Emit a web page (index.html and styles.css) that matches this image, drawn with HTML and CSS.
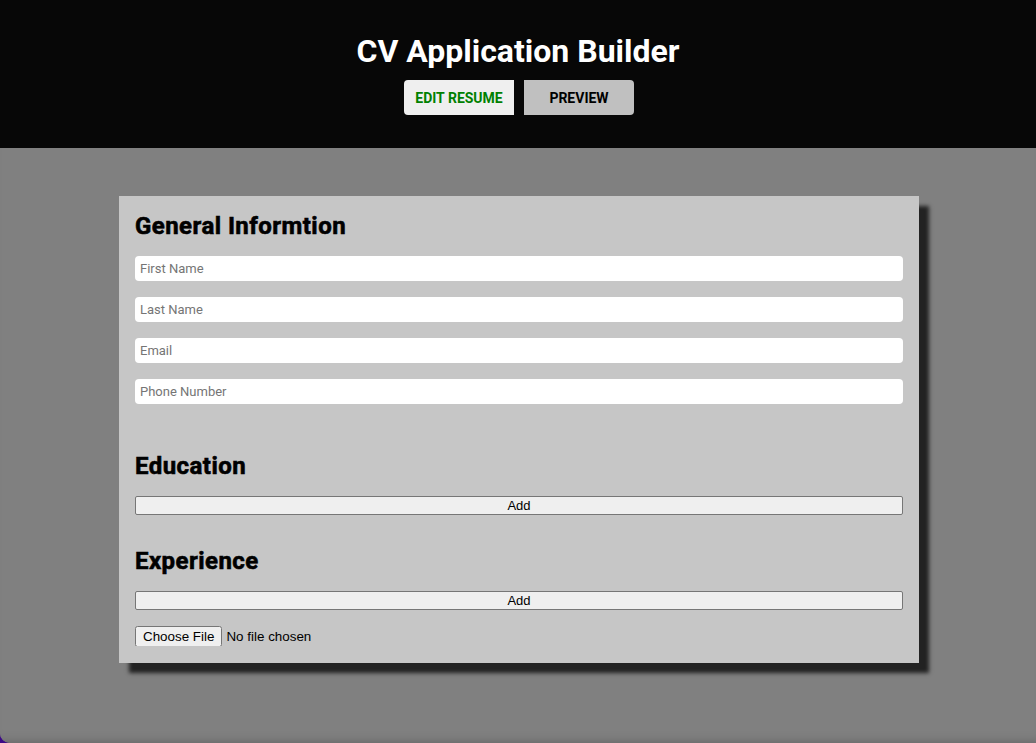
FILE: index.html
```html
<!DOCTYPE html>
<html lang="en">
<head>
<meta charset="utf-8">
<title>CV Application Builder</title>
<link rel="stylesheet" href="styles.css">
</head>
<body>
<div class="app">
  <header class="header">
    <h1 class="title">CV Application Builder</h1>
    <nav class="tabs">
      <button class="tab tab-edit">EDIT RESUME</button>
      <button class="tab tab-preview">PREVIEW</button>
    </nav>
  </header>
  <main class="main">
    <div class="card">
      <section class="section section-general">
        <h2 class="section-title">General Informtion</h2>
        <input class="field" type="text" placeholder="First Name">
        <input class="field" type="text" placeholder="Last Name">
        <input class="field" type="text" placeholder="Email">
        <input class="field" type="text" placeholder="Phone Number">
      </section>
      <section class="section">
        <h2 class="section-title">Education</h2>
        <button class="add-btn">Add</button>
      </section>
      <section class="section section-last">
        <h2 class="section-title">Experience</h2>
        <button class="add-btn">Add</button>
        <input class="file" type="file">
      </section>
    </div>
  </main>
</div>
</body>
</html>
```
FILE: styles.css
```css
html, body {
  margin: 0;
  padding: 0;
  height: 100%;
}
body {
  background: #3d0a86;
  font-family: Roboto, "Liberation Sans", Arial, sans-serif;
}
.app {
  min-height: 100vh;
  display: flex;
  flex-direction: column;
  border-radius: 0 0 0 10px;
  overflow: hidden;
  background: #808080;
}
.header {
  background: #070707;
  padding: 32px 0 33px;
  display: flex;
  flex-direction: column;
  align-items: center;
}
.title {
  margin: 0 0 10px;
  color: #ffffff;
  font-family: Roboto, sans-serif;
  font-weight: 700;
  font-size: 32px;
  line-height: 38px;
}
.tabs {
  display: flex;
  gap: 10px;
  padding-left: 2px;
}
.tab {
  width: 110px;
  height: 35px;
  border: none;
  font-family: Roboto, sans-serif;
  font-weight: 700;
  font-size: 14px;
  padding: 0;
  cursor: pointer;
}
.tab-edit {
  background: #efefef;
  color: #008000;
  border-radius: 4px 0 0 4px;
}
.tab-preview {
  background: #c0c0c0;
  color: #000000;
  border-radius: 0 4px 4px 0;
}
.main {
  flex: 1;
  display: flex;
  justify-content: center;
  align-items: flex-start;
  padding: 48px 0 0 2px;
  background: #808080;
  box-shadow: inset 0 -10px 12px -10px rgba(0,0,0,0.25);
}
.card {
  width: 800px;
  box-sizing: border-box;
  padding: 16px 16px 17px;
  background: #c6c6c6;
  box-shadow: 10px 10px 4px #222222;
  display: flex;
  flex-direction: column;
}
.section {
  display: flex;
  flex-direction: column;
  margin-bottom: 32px;
}
.section-last {
  margin-bottom: 0;
}
.section-title {
  margin: 0 0 16px;
  font-family: Roboto, sans-serif;
  font-weight: 700;
  font-size: 24px;
  line-height: 28px;
  letter-spacing: 0.45px;
  -webkit-text-stroke: 0.6px #000;
  color: #000;
}
.field {
  height: 25px;
  box-sizing: border-box;
  margin: 0 0 16px;
  border: none;
  border-radius: 4px;
  background: #ffffff;
  padding: 0 5px;
  font-family: Roboto, sans-serif;
  font-size: 13px;
  color: #222;
}
.field::placeholder {
  color: #757575;
}
.add-btn {
  height: 19px;
  box-sizing: border-box;
  margin: 0;
  padding: 0;
  background: #efefef;
  border: 1px solid #767676;
  border-radius: 2px;
  font-family: "Liberation Sans", Arial, sans-serif;
  font-size: 13px;
  color: #000;
}
.file {
  margin-top: 16px;
  font-family: "Liberation Sans", Arial, sans-serif;
  font-size: 13.4px;
  color: #000;
  height: 20px;
}
```
